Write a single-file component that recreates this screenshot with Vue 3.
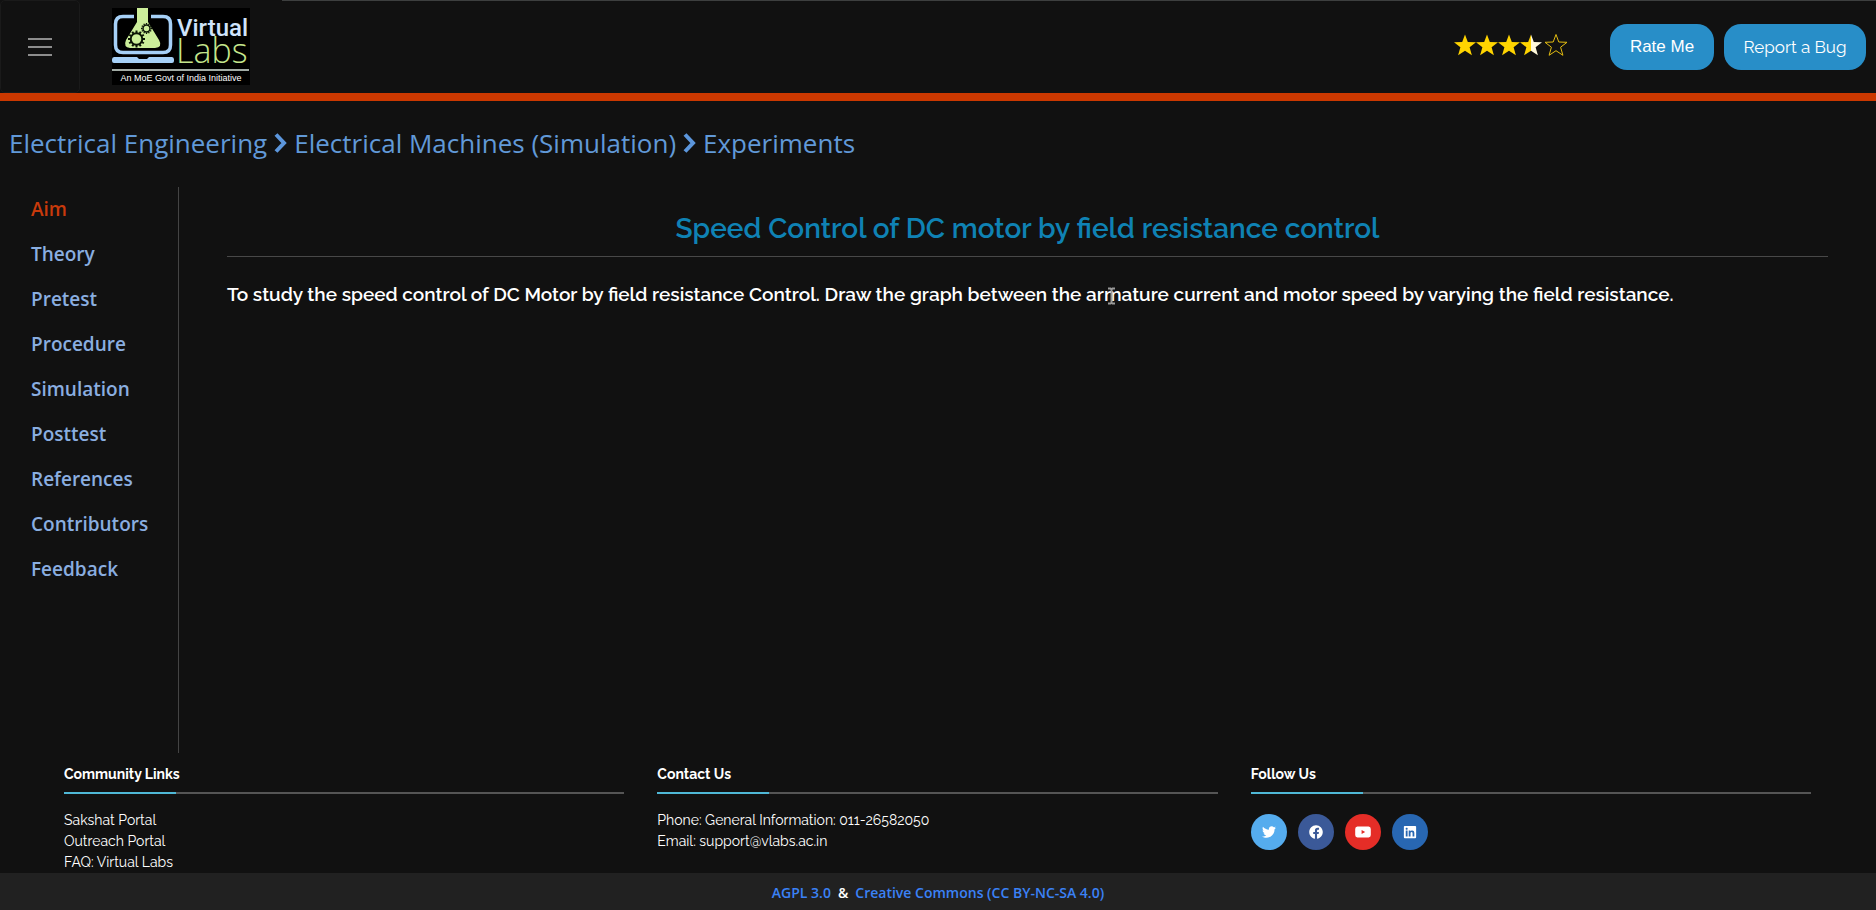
<script setup>
const sections = ['Aim', 'Theory', 'Pretest', 'Procedure', 'Simulation', 'Posttest', 'References', 'Contributors', 'Feedback']
const star = 'M11 0.500 L13.8 8 L22 8.300 L15.6 13.200 L17.9 21.300 L11 16.700 L4.100 21.300 L6.400 13.200 L0 8.300 L8.200 8 Z'
const teeth = [0, 30, 60, 90, 120, 150, 180, 210, 240, 270, 300, 330]
const social = [
  { name: 'Twitter', cls: 'twitter', box: '0 0 512 512', d: 'M459.37 151.716c.325 4.548.325 9.097.325 13.645 0 138.72-105.583 298.558-298.558 298.558-59.452 0-114.68-17.219-161.137-47.106 8.447.974 16.568 1.299 25.34 1.299 49.055 0 94.213-16.568 130.274-44.832-46.132-.975-84.792-31.188-98.112-72.772 6.498.974 12.995 1.624 19.818 1.624 9.421 0 18.843-1.3 27.614-3.573-48.081-9.747-84.143-51.98-84.143-102.985v-1.299c13.969 7.797 30.214 12.67 47.431 13.319-28.264-18.843-46.781-51.005-46.781-87.391 0-19.492 5.197-37.36 14.294-52.954 51.655 63.675 129.3 105.258 216.365 109.807-1.624-7.797-2.599-15.918-2.599-24.04 0-57.828 46.782-104.934 104.934-104.934 30.213 0 57.502 12.67 76.67 33.137 23.715-4.548 46.456-13.32 66.599-25.34-7.798 24.366-24.366 44.833-46.132 57.827 21.117-2.273 41.584-8.122 60.426-16.243-14.292 20.791-32.161 39.308-52.628 54.253z' },
  { name: 'Facebook', cls: 'facebook', box: '0 0 512 512', d: 'M504 256C504 119 393 8 256 8S8 119 8 256c0 123.78 90.69 226.38 209.25 245V327.69h-63V256h63v-54.64c0-62.15 37-96.48 93.67-96.48 27.14 0 55.52 4.84 55.52 4.84v61h-31.28c-30.8 0-40.41 19.12-40.41 38.73V256h68.78l-11 71.69h-57.78V501C413.31 482.38 504 379.78 504 256z' },
  { name: 'YouTube', cls: 'youtube', box: '0 0 16 14', d: 'M2.4 1.5H13.6Q15.8 1.700 15.8 3.900V10.100Q15.8 12.300 13.6 12.500H2.4Q.2 12.300 .2 10.100V3.900Q.2 1.700 2.4 1.500ZM6.600 5V9L10.200 7Z' },
  { name: 'LinkedIn', cls: 'linkedin', box: '0 0 448 512', d: 'M416 32H31.9C14.3 32 0 46.5 0 64.3v383.4C0 465.5 14.3 480 31.9 480H416c17.6 0 32-14.5 32-32.3V64.3c0-17.8-14.4-32.3-32-32.3zM135.4 416H69V202.2h66.5V416zm-33.2-243c-21.3 0-38.5-17.3-38.5-38.5S80.9 96 102.2 96c21.2 0 38.5 17.3 38.5 38.5 0 21.3-17.2 38.5-38.5 38.5zm282.1 243h-66.4V312c0-24.8-.5-56.7-34.5-56.7-34.6 0-39.9 27-39.9 54.9V416h-66.4V202.2h63.7v29.2h.9c8.9-16.8 30.6-34.5 62.2-34.5 66.5 0 78.9 43.8 78.9 100.9V416z' },
]
</script>

<template>
  <div class="page">
    <header class="header">
      <button class="menu" type="button" aria-label="Menu"><span></span><span></span><span></span></button>
      <a class="logo" href="#" aria-label="Virtual Labs">
        <svg width="138" height="77" viewBox="0 0 138 77">
          <rect width="138" height="77" fill="#000" />
          <path d="M22 8.500H11Q3.500 8.500 3.500 16V37Q3.500 44.500 11 44.500H51Q58.500 44.500 58.500 37V16Q58.500 8.500 51 8.500H39" fill="none" stroke="#a6d0f7" stroke-width="3.500" />
          <path d="M25 0H36V14L47 32Q51 39 43 40H18Q11 39 14 32L25 14Z" fill="#ccee9a" />
          <g transform="translate(24.500 31)" fill="none" stroke="#0b1405">
            <circle r="5.800" stroke-width="2" />
            <path v-for="a in teeth" :key="a" d="M0 -6V-8.500" stroke-width="2" :transform="`rotate(${a})`" />
          </g>
          <g transform="translate(34.500 20.500)" fill="none" stroke="#0b1405">
            <circle r="3.500" stroke-width="1.500" />
            <path v-for="a in teeth" :key="a" d="M0 -4V-5.500" stroke-width="1.300" :transform="`rotate(${a})`" />
          </g>
          <path d="M0 51.500Q0 49 2 49H25L27 51H35L37 49H60Q62 49 62 51.500V53Q62 55 60 55H2Q0 55 0 53Z" fill="#a6d0f7" />
          <text x="65" y="28" class="logo-virtual">Virtual</text>
          <text x="64" y="55" class="logo-labs">Labs</text>
          <path d="M0 62H137" stroke="#d8e4dc" stroke-width="1.500" />
          <text x="69" y="73" text-anchor="middle" class="logo-note">An MoE Govt of India Initiative</text>
        </svg>
      </a>
      <div class="actions">
        <div class="stars" role="img" aria-label="Rated 3.5 of 5">
          <svg v-for="n in 3" :key="n" width="22" height="22" viewBox="0 0 22 22"><path :d="star" fill="#ffd400" /></svg>
          <svg width="22" height="22" viewBox="0 0 22 22">
            <defs><linearGradient id="half"><stop offset=".5" stop-color="#ffd400" /><stop offset=".5" stop-color="#fff9dc" /></linearGradient></defs>
            <path :d="star" fill="url(#half)" />
          </svg>
          <svg class="empty" width="22" height="22" viewBox="0 0 22 22"><path :d="star" fill="none" stroke="#e3bd12" /></svg>
        </div>
        <button class="pill rate" type="button">Rate Me</button>
        <button class="pill report" type="button">Report a Bug</button>
      </div>
    </header>

    <nav class="crumbs" aria-label="Breadcrumb">
      <a href="#">Electrical Engineering</a>
      <svg width="13" height="22" viewBox="0 0 13 22"><path d="M2 2.500L10 11L2 19.500" /></svg>
      <a href="#">Electrical Machines (Simulation)</a>
      <svg width="13" height="22" viewBox="0 0 13 22"><path d="M2 2.500L10 11L2 19.500" /></svg>
      <a href="#">Experiments</a>
    </nav>

    <div class="body">
      <nav class="side" aria-label="Sections">
        <a v-for="(s, i) in sections" :key="s" href="#" :class="{ active: i === 0 }">{{ s }}</a>
      </nav>
      <main class="main">
        <h1>Speed Control of DC motor by field resistance control</h1>
        <p>To study the speed control of DC Motor by field resistance Control. Draw the graph between the armature current and motor speed by varying the field resistance.
          <svg class="cursor" width="9" height="18" viewBox="0 0 9 18"><path d="M1 1.500H3.500L4.500 2.500L5.500 1.500H8M4.500 2.500V15.500M1 16.500H3.500L4.500 15.500L5.500 16.500H8" /></svg>
        </p>
      </main>
    </div>

    <footer>
      <div class="columns">
        <section>
          <h2>Community Links</h2>
          <div class="rule"></div>
          <ul>
            <li><a href="#">Sakshat Portal</a></li>
            <li><a href="#">Outreach Portal</a></li>
            <li><a href="#">FAQ: Virtual Labs</a></li>
          </ul>
        </section>
        <section>
          <h2>Contact Us</h2>
          <div class="rule"></div>
          <ul>
            <li>Phone: General Information: 011-26582050</li>
            <li>Email: support@vlabs.ac.in</li>
          </ul>
        </section>
        <section>
          <h2>Follow Us</h2>
          <div class="rule"></div>
          <div class="social">
            <a v-for="s in social" :key="s.name" href="#" :class="s.cls" :aria-label="s.name">
              <svg width="16" height="14" :viewBox="s.box"><path :d="s.d" fill-rule="evenodd" /></svg>
            </a>
          </div>
        </section>
      </div>
      <div class="license">
        <a href="#">AGPL 3.0</a><span>&amp;</span><a href="#">Creative Commons (CC BY-NC-SA 4.0)</a>
      </div>
    </footer>
  </div>
</template>

<style>
body { background: #111; }
</style>

<style scoped>
* { box-sizing: border-box; }
.page { display: flex; flex-direction: column; min-height: 100vh; background: #111; color: #fff; font-family: Raleway, Lato, sans-serif; }
a { text-decoration: none; color: inherit; }
h1, h2, p, ul { margin: 0; padding: 0; }
ul { list-style: none; }
.header { position: relative; display: flex; align-items: center; height: 101px; border-bottom: 8px solid #cb3800; }
.header::before { content: ""; position: absolute; top: 0; left: 282px; right: 0; height: 1px; background: #3d3f3f; }
.menu { width: 80px; height: 93px; padding: 0; display: flex; flex-direction: column; align-items: center; justify-content: center; gap: 6px; background: none; border: 1px solid #1a1a1a; border-radius: 5px; }
.menu span { width: 24px; height: 2px; background: #8d8d8d; }
.logo { margin-left: 32px; height: 77px; }
.logo svg { display: block; }
.logo-virtual { font: 500 24px Roboto, sans-serif; fill: #cfe3fb; }
.logo-labs { font: 300 34px "Open Sans", sans-serif; fill: #c4e58c; }
.logo-note { font: 9px "Liberation Sans", sans-serif; fill: #fff; }
.actions { margin-left: auto; display: flex; align-items: center; padding-right: 10px; }
.stars { display: flex; margin-right: 43px; padding-bottom: 4px; }
.stars .empty { margin-left: 3px; }
.pill { height: 46px; padding: 0; border: 0; border-radius: 17px; background: #288ec8; color: #fff; }
.rate { width: 104px; font: 17px "Liberation Sans", sans-serif; }
.report { width: 142px; margin-left: 10px; font: 17px Raleway, Lato, sans-serif; }
.crumbs { display: flex; align-items: center; height: 86px; padding: 0 9px 2px; gap: 7px; font: 26px "Open Sans", sans-serif; color: #6199d8; }
.crumbs svg { fill: none; stroke: #5c96dc; stroke-width: 4; }
.body { flex: 1; display: flex; }
.side { width: 179px; padding: 0 0 0 31px; border-right: 1px solid #444; display: flex; flex-direction: column; font: 600 19px/45px "Open Sans", sans-serif; color: #8aaee0; }
.side .active { color: #c93a0b; }
.main { flex: 1; padding: 20px 48px 0; }
h1 { height: 50px; border-bottom: 1px solid #484848; font-size: 28px; line-height: 44px; font-weight: 600; text-align: center; color: #0f82b4; }
p { position: relative; margin-top: 23px; font-size: 19px; line-height: 28px; font-weight: 600; }
.cursor { position: absolute; left: 880px; top: 7px; fill: none; stroke: #999; stroke-width: 2; }
.columns { display: grid; grid-template-columns: repeat(3, 1fr); gap: 33px; padding: 10px 65px 0 64px; }
h2 { font-size: 14px; line-height: 22px; font-weight: 700; }
.rule { height: 2px; margin: 7px 0 16px; background: linear-gradient(to right, #4fb8d6 20%, #555 20%); }
li { font-size: 14px; line-height: 21px; font-variant-numeric: oldstyle-nums; }
.social { display: flex; gap: 11px; padding-top: 4px; }
.social a { width: 36px; height: 36px; border-radius: 50%; display: flex; align-items: center; justify-content: center; }
.social svg { fill: #fff; }
.twitter { background: #55acee; }
.facebook { background: #3b5998; }
.youtube { background: #e52d27; }
.linkedin { background: #2867b2; }
.license { display: flex; justify-content: center; gap: 7px; height: 37px; background: #212121; font: 600 14px/39px "Open Sans", sans-serif; }
.license a { color: #3b82f6; }
</style>
